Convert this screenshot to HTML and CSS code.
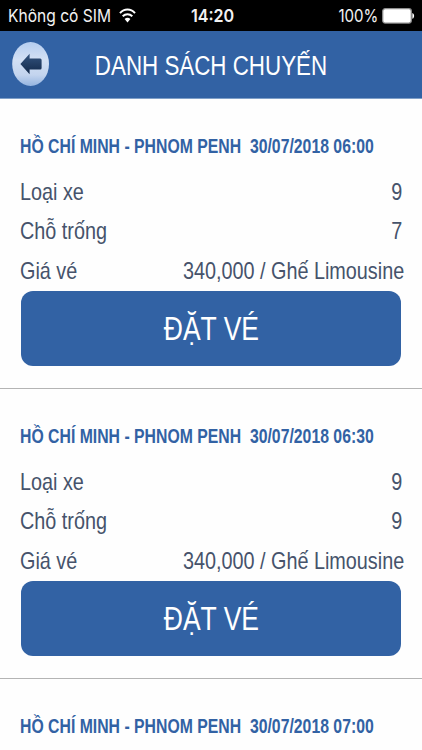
FILE: index.html
```html
<!DOCTYPE html>
<html lang="vi">
<head>
<meta charset="utf-8">
<title>Danh sách chuyến</title>
<link rel="stylesheet" href="styles.css">
</head>
<body>
<div class="status">
  <div class="carrier"><span class="carrier-name">Không có SIM</span>
    <svg class="wifi" width="17" height="15" viewBox="0 0 17 15"><path d="M1 5.2C5.2.4 11.8.4 16 5.2M3.7 8.3c2.8-2.9 6.8-2.9 9.6 0" fill="none" stroke="#fff" stroke-width="2"/><path d="M5.6 11c1.7-1.8 4.1-1.8 5.8 0l-2.9 3.4z" fill="#fff"/></svg>
  </div>
  <span class="clock">14:20</span>
  <div class="power"><span class="percent">100%</span>
    <svg width="33" height="16" viewBox="0 0 33 16"><rect x=".7" y=".7" width="28.6" height="14.4" rx="2.5" fill="#fff" stroke="#8d8d8d" stroke-width="1.3"/><path d="M30.3 5c2.4.6 2.4 5.2 0 5.8z" fill="#fff"/></svg>
  </div>
</div>
<header class="header">
  <svg class="back" width="38" height="46" viewBox="0 0 38 46">
    <defs>
      <linearGradient id="disc" x1="0" y1="0" x2="0" y2="1"><stop offset="0" stop-color="#b5cdf0"/><stop offset=".4" stop-color="#d3e0f4"/><stop offset=".75" stop-color="#c3d4ee"/><stop offset="1" stop-color="#94b4e0"/></linearGradient>
      <linearGradient id="arrow" x1="0" y1="0" x2="0" y2="1"><stop offset="0" stop-color="#34547f"/><stop offset="1" stop-color="#122849"/></linearGradient>
    </defs>
    <ellipse cx="18.6" cy="22" rx="18.4" ry="22" fill="url(#disc)"/>
    <path d="M8.4 22 17.6 11.8v4.7h10.6q1.4 0 1.4 1.5v8q0 1.5-1.4 1.5H17.6v4.7z" fill="url(#arrow)"/>
  </svg>
  <h1 class="title">DANH SÁCH CHUYẾN</h1>
</header>
<main>
  <section class="trip">
    <h2 class="route">HỒ CHÍ MINH - PHNOM PENH  30/07/2018 06:00</h2>
    <div class="row"><span class="label">Loại xe</span><span class="value short">9</span></div>
    <div class="row"><span class="label">Chỗ trống</span><span class="value short">7</span></div>
    <div class="row"><span class="label">Giá vé</span><span class="value">340,000 / Ghế Limousine</span></div>
    <button class="book"><span class="book-text">ĐẶT VÉ</span></button>
  </section>
  <section class="trip">
    <h2 class="route">HỒ CHÍ MINH - PHNOM PENH  30/07/2018 06:30</h2>
    <div class="row"><span class="label">Loại xe</span><span class="value short">9</span></div>
    <div class="row"><span class="label">Chỗ trống</span><span class="value short">9</span></div>
    <div class="row"><span class="label">Giá vé</span><span class="value">340,000 / Ghế Limousine</span></div>
    <button class="book"><span class="book-text">ĐẶT VÉ</span></button>
  </section>
  <section class="trip last">
    <h2 class="route">HỒ CHÍ MINH - PHNOM PENH  30/07/2018 07:00</h2>
  </section>
</main>
</body>
</html>
```
FILE: styles.css
```css
* { box-sizing: border-box; }
html, body { height: 750px; margin: 0; overflow: hidden; }
body {
  background: #fefefe;
  font-family: "Liberation Sans", Arial, sans-serif;
  color: #46536b;
}
.status {
  height: 31px;
  background: #000;
  color: #f2f2f2;
  display: grid;
  grid-template-columns: 1fr auto 1fr;
  align-items: center;
  padding: 0 7px 0 8px;
  font: 17.5px/31px Inter, sans-serif;
  white-space: nowrap;
}
.carrier, .power { display: flex; align-items: center; }
.carrier-name { width: 111px; transform: scaleX(.89); transform-origin: left; }
.clock { font-weight: 600; margin-left: 2px; transform: scaleX(.92); }
.power { justify-content: flex-end; gap: 4px; }
.percent { transform: scaleX(.86); transform-origin: right; }
.header {
  height: 68px;
  background: #3262a4;
  border-bottom: 1px solid #7f9fc8;
  display: grid;
  grid-template-columns: 38px 1fr 38px;
  align-items: center;
  padding: 0 12px;
}
.title {
  margin: 0;
  padding-top: 2px;
  text-align: center;
  color: #fff;
  font-size: 27px;
  line-height: 34px;
  font-weight: 400;
  white-space: nowrap;
  transform: scaleX(.828);
}
.trip {
  height: 290px;
  padding: 35px 18px 0 20px;
  border-bottom: 1.5px solid #b4b4b4;
}
.last { height: 71px; padding-bottom: 0; border-bottom: 0; overflow: hidden; }
.last .route { margin-bottom: 0; }
.route {
  margin: 0 0 14px;
  color: #3262a4;
  font-size: 19.5px;
  line-height: 24px;
  font-weight: 700;
  white-space: pre;
  transform: scaleX(.81);
  transform-origin: left;
}
.row {
  display: flex;
  justify-content: space-between;
  height: 39.3px;
  font-size: 24px;
  line-height: 39.3px;
  white-space: nowrap;
}
.label { transform: scaleX(.825); transform-origin: left; }
.value { transform: scaleX(.825); transform-origin: right; }
.short { margin-right: 2px; }
.book {
  display: block;
  width: 380px;
  height: 75px;
  margin: 1px 0 0 1px;
  padding: 0;
  border: 0;
  border-radius: 12px;
  background: #3262a4;
  color: #fff;
  font: 32.5px/76px "Liberation Sans", Arial, sans-serif;
}
.book-text { display: inline-block; transform: scaleX(.815); }
```
